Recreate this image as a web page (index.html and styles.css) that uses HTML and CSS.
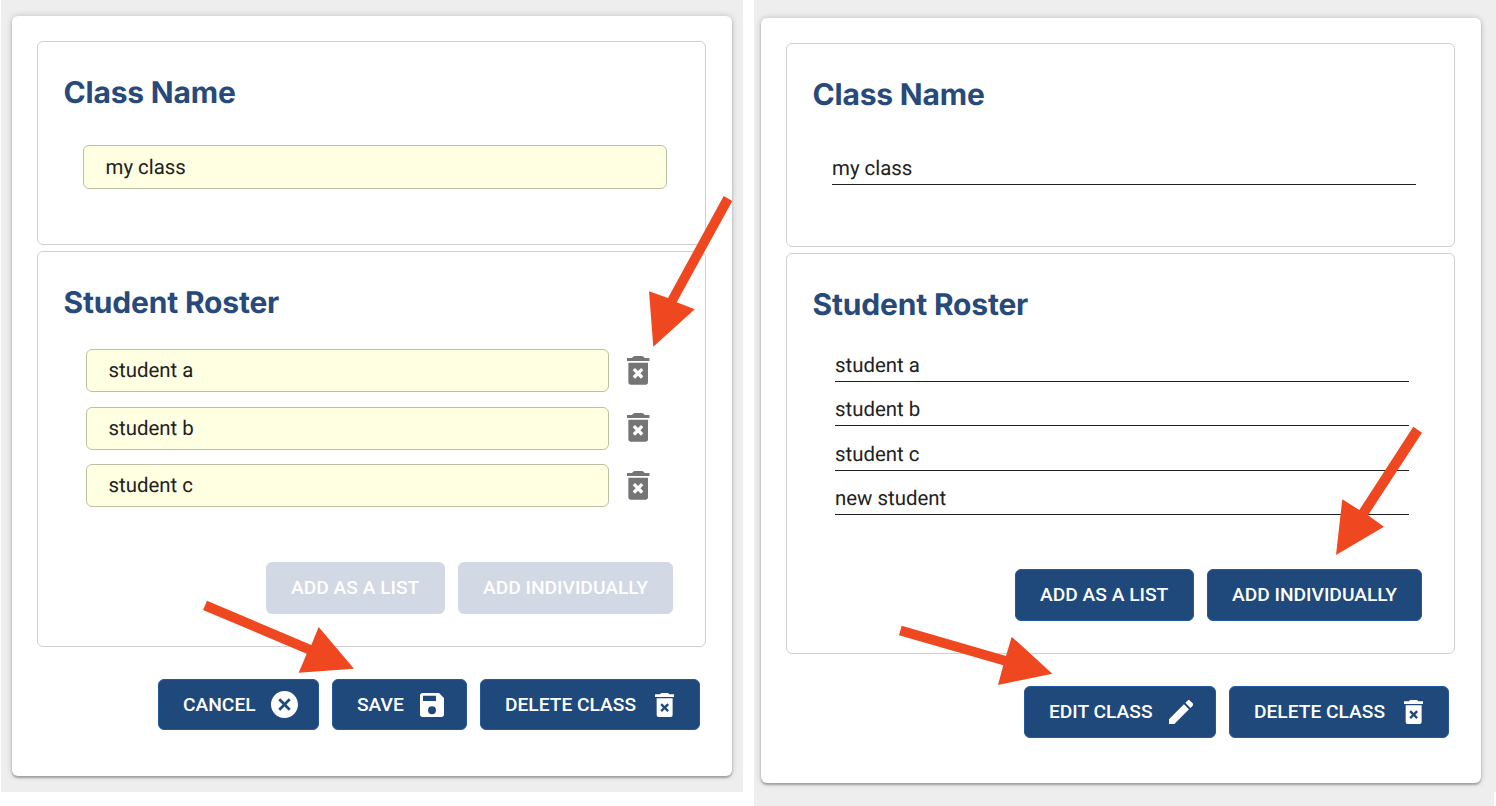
FILE: index.html
```html
<!DOCTYPE html>
<html lang="en">
<head>
<meta charset="utf-8">
<title>Class editor</title>
<link rel="stylesheet" href="styles.css">
</head>
<body>
<svg class="defs" aria-hidden="true">
  <symbol id="trash" viewBox="0 0 68 90">
    <path d="M0 6H15Q18 0 24 0H44Q50 0 53 6H68V15H0Z"/>
    <path fill-rule="evenodd" d="M4 20H63V78Q63 86 55 86H12Q4 86 4 78ZM17 43L26 52L17 61L24 68L33 59L42 68L49 61L40 52L49 43L42 36L33 45L24 36Z"/>
  </symbol>
  <symbol id="trash-small" viewBox="0 0 58 72">
    <path d="M0 4H15Q17 0 21 0H37Q41 0 43 4H58V12H0Z"/>
    <path fill-rule="evenodd" d="M5 16H53V66Q53 72 47 72H11Q5 72 5 66ZM16 36L24 44L16 52L21 57L29 49L37 57L42 52L34 44L42 36L37 31L29 39L21 31Z"/>
  </symbol>
  <symbol id="cancel" viewBox="2 2 20 20">
    <path d="M12 2C6.47 2 2 6.47 2 12s4.470 10 10 10 10-4.470 10-10S17.530 2 12 2zm4.600 13.190L15.190 16.600 12 13.410 8.810 16.600 7.400 15.190 10.590 12 7.400 8.810 8.810 7.400 12 10.590 15.190 7.400 16.600 8.810 13.410 12z"/>
  </symbol>
  <symbol id="save" viewBox="0 0 72 72">
    <path fill-rule="evenodd" d="M8 0H57L72 15V64Q72 72 64 72H8Q0 72 0 64V8Q0 0 8 0ZM9 8V24H48V8ZM36 40A12 12 0 1 0 36 64A12 12 0 1 0 36 40Z"/>
  </symbol>
  <symbol id="pencil" viewBox="3 3 18 18">
    <path d="M3 17.250V21h3.750L17.810 9.940l-3.750-3.750L3 17.250zM20.710 7.040c.39-.39.39-1.020 0-1.410l-2.340-2.340c-.39-.39-1.020-.39-1.410 0l-1.830 1.830 3.750 3.750 1.830-1.830z"/>
  </symbol>
</svg>

<main class="page">
  <section class="panel panel-edit">
    <div class="card">
      <div class="box name-box">
        <h2>Class Name</h2>
        <div class="field name-field">my class</div>
      </div>
      <div class="box roster-box">
        <h2>Student Roster</h2>
        <ul class="rows">
          <li><div class="field">student a</div><svg class="bin"><use href="#trash"/></svg></li>
          <li><div class="field">student b</div><svg class="bin"><use href="#trash"/></svg></li>
          <li><div class="field">student c</div><svg class="bin"><use href="#trash"/></svg></li>
        </ul>
        <div class="actions">
          <button class="btn w-list" disabled>ADD AS A LIST</button>
          <button class="btn w-single" disabled>ADD INDIVIDUALLY</button>
        </div>
      </div>
      <div class="actions footer">
        <button class="btn w-cancel">CANCEL<svg class="i-cancel"><use href="#cancel"/></svg></button>
        <button class="btn w-save">SAVE<svg class="i-save"><use href="#save"/></svg></button>
        <button class="btn w-delete">DELETE CLASS<svg class="i-trash"><use href="#trash-small"/></svg></button>
      </div>
    </div>
  </section>

  <section class="panel panel-view">
    <div class="card">
      <div class="box name-box">
        <h2>Class Name</h2>
        <div class="line name-line">my class</div>
      </div>
      <div class="box roster-box">
        <h2>Student Roster</h2>
        <ul class="lines">
          <li class="line">student a</li>
          <li class="line">student b</li>
          <li class="line">student c</li>
          <li class="line">new student</li>
        </ul>
        <div class="actions">
          <button class="btn w-list">ADD AS A LIST</button>
          <button class="btn w-single">ADD INDIVIDUALLY</button>
        </div>
      </div>
      <div class="actions footer">
        <button class="btn w-edit">EDIT CLASS<svg class="i-pencil"><use href="#pencil"/></svg></button>
        <button class="btn w-delete">DELETE CLASS<svg class="i-trash"><use href="#trash-small"/></svg></button>
      </div>
    </div>
  </section>
</main>

<svg class="arrows" viewBox="0 0 1496 806" aria-hidden="true">
  <polygon points="653.3,346.7 649,291.3 668,298 723.7,196 732.3,201 676.7,302.3 694.7,309.3"/>
  <polygon points="354,668.7 318.7,627 311.3,645 207,600.7 203,610 306.7,653.7 298.7,672.7"/>
  <polygon points="1052.3,673.7 1011.7,636.7 1006,656 901.7,625.7 899,635.3 1003.3,665.3 998,685"/>
  <polygon points="1336,555 1342.3,499.3 1359.3,510 1413.3,426.7 1422,432.7 1368,515.3 1384,526.7"/>
</svg>
</body>
</html>
```
FILE: styles.css
```css
* { box-sizing: border-box; }

body {
  margin: 0;
  width: 1496px;
  height: 806px;
  overflow: hidden;
  background: #fff;
  color: #212121;
  font-family: Roboto, "Liberation Sans", sans-serif;
  text-rendering: geometricPrecision;
}

.defs { display: none; }

.page {
  display: flex;
  align-items: flex-start;
  gap: 11px;
  padding-left: 1px;
}

.panel {
  flex: none;
  width: 742px;
  background: #eee;
}
.panel-edit { height: 792px; padding: 16px 0 0 11px; }
.panel-view {
  height: 806px;
  padding: 18px 0 0 7px;
  clip-path: polygon(0 0, 100% 0, 100% 792px, 740px 792px, 740px 100%, 0 100%);
}

.card {
  width: 720px;
  padding: 25px 26px 0 25px;
  border-radius: 6px;
  background: #fff;
  box-shadow: 0 2px 2px rgba(0, 0, 0, .26), 0 0 6px rgba(0, 0, 0, .2);
}
.panel-edit .card { height: 759.500px; }
.panel-view .card { height: 764.500px; }

.box {
  display: flex;
  flex-direction: column;
  border: 1px solid #d0d0d0;
  border-radius: 6px;
}
.name-box { height: 204px; margin-bottom: 6px; }
.panel-edit .roster-box { height: 396px; }
.panel-view .roster-box { height: 401px; }

h2 {
  margin: 31px 0 0 25.500px;
  height: 40px;
  color: #284a7a;
  font: 700 30px/40px Inter, sans-serif;
  letter-spacing: -.18px;
  white-space: nowrap;
}

.field {
  height: 43px;
  padding-left: 21.500px;
  border: 1px solid #bfbfa3;
  border-radius: 6px;
  background: #ffffe1;
  font-size: 20.400px;
  line-height: 40px;
}
.name-field { width: 584px; height: 44px; margin: 32px 0 0 45px; line-height: 42px; }

.rows {
  display: flex;
  flex-direction: column;
  gap: 14.500px;
  margin: 26px 0 0 48px;
  padding: 0;
  list-style: none;
}
.rows li { display: flex; align-items: center; gap: 18px; }
.rows .field { width: 523px; }
.bin { width: 22.700px; height: 30px; fill: #757575; }

.line {
  height: 32px;
  border-bottom: 1px solid #212121;
  font-size: 20.400px;
  line-height: 30px;
}
.name-line { width: 584px; margin: 38px 0 0 45px; }

.lines {
  display: flex;
  flex-direction: column;
  gap: 12.400px;
  width: 574px;
  margin: 25px 0 0 48px;
  padding: 0;
  list-style: none;
}

.actions { display: flex; justify-content: flex-end; gap: 13px; }
.box .actions { margin: auto 32px 32px 0; }
.footer { margin: 32px 6px 0 0; }

.btn {
  display: flex;
  align-items: center;
  justify-content: space-between;
  height: 52px;
  padding: 0 24px;
  border: 1px solid #2459a0;
  border-radius: 6px;
  background: #1f497b;
  color: #fff;
  font: 500 19.200px/50px Roboto, "Liberation Sans", sans-serif;
  letter-spacing: 0;
  white-space: nowrap;
}
.btn:disabled { border-color: #d2d9e4; background: #d2d9e4; }
.panel-edit .footer .btn { height: 51px; }

.w-list { width: 179px; }
.w-single { width: 215px; }
.w-cancel { width: 161px; padding-right: 20px; }
.w-save { width: 135px; padding-right: 22px; }
.w-delete { width: 220px; padding-right: 24.700px; }
.w-edit { width: 192px; padding-right: 22px; }

.i-cancel { width: 27px; height: 27px; fill: #fff; }
.i-save { width: 24px; height: 24px; fill: #fff; }
.i-trash { width: 19.300px; height: 24px; fill: #fff; }
.i-pencil { width: 24.300px; height: 24.300px; fill: #fff; }

/* Annotation arrows drawn over both panels */
.arrows {
  position: absolute;
  top: 0;
  left: 0;
  width: 1496px;
  height: 806px;
  fill: #ef471f;
  pointer-events: none;
}
```
